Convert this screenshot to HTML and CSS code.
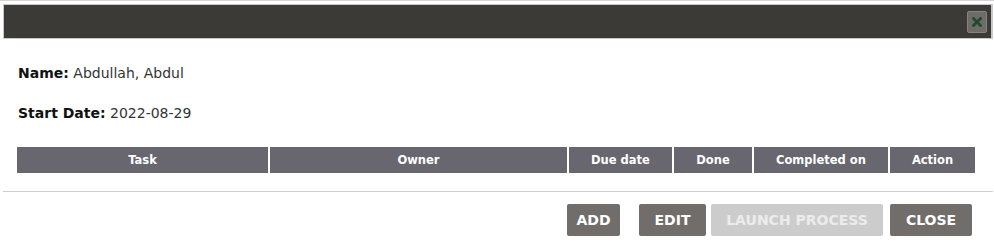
FILE: index.html
```html
<!DOCTYPE html>
<html>
<head>
<meta charset="utf-8">
<link rel="stylesheet" href="styles.css">
</head>
<body>
<div class="topline"></div>
<div class="dialog">
  <div class="titlebar">
    <button class="xbtn" aria-label="close">
      <svg width="10" height="10" viewBox="0 0 10 10"><path d="M1.5 1.5 L8.5 8.5 M8.5 1.5 L1.5 8.5" stroke="#1f4d2c" stroke-width="2.8" stroke-linecap="square"/></svg>
    </button>
  </div>
  <div class="content">
    <p class="field"><b>Name:</b> Abdullah, Abdul</p>
    <p class="field second"><b>Start Date:</b> 2022-08-29</p>
    <div class="thead">
      <div class="th c-task">Task</div>
      <div class="th c-owner">Owner</div>
      <div class="th c-due">Due date</div>
      <div class="th c-done">Done</div>
      <div class="th c-comp">Completed on</div>
      <div class="th c-act">Action</div>
    </div>
  </div>
  <div class="sep"></div>
  <div class="actions">
    <button class="btn add">ADD</button>
    <button class="btn edit">EDIT</button>
    <button class="btn launch" disabled>LAUNCH PROCESS</button>
    <button class="btn close">CLOSE</button>
  </div>
</div>
</body>
</html>
```
FILE: styles.css
```css
html, body { margin: 0; padding: 0; background: #fff; }
body { font-family: "DejaVu Sans", "Open Sans", sans-serif; color: #222; width: 994px; height: 250px; overflow: hidden; }
.topline { height: 1px; background: #d4d4d4; }
.dialog { margin: 3px 1px 0 3px; }
.titlebar {
  height: 35px; box-sizing: border-box; background: #3c3a37;
  border: 1px solid #c9c9c9; border-right-width: 2px;
  display: flex; justify-content: flex-end; align-items: center; padding-right: 4px;
}
.xbtn {
  width: 20px; height: 22px; padding: 0; margin: 0; border: 1px solid #858280; border-radius: 2px;
  background: #6e6b68; display: flex; align-items: center; justify-content: center;
}
.content { padding: 0 16px 0 15px; }
.field { margin: 0; font-size: 14px; line-height: 17px; color: #333; padding-top: 26px; }
.field.second { padding-top: 23px; }
.field b { color: #111; font-weight: bold; }
.thead { display: flex; gap: 2px; margin-top: 25px; height: 26px; margin-left: -1px; }
.th {
  background: #68666e; color: #fff; font-weight: bold; font-size: 11.5px;
  display: flex; align-items: center; justify-content: center;
}
.c-task { width: 251px; }
.c-owner { width: 297px; }
.c-due { width: 103px; }
.c-done { width: 78px; }
.c-comp { width: 134px; }
.c-act { width: 85px; }
.sep { height: 1px; background: #cfcfcf; margin-top: 18px; }
.actions { display: flex; justify-content: flex-end; padding-right: 21px; margin-top: 12px; }
.btn {
  height: 32px; border: none; border-radius: 2px; background: #716d6a; color: #fff;
  font-family: inherit; font-weight: bold; font-size: 14px; padding: 0; margin: 0;
}
.add { width: 53px; }
.edit { width: 67px; margin-left: 19px; }
.launch { width: 172px; margin-left: 5px; background: #cdcccc; color: #ececec; }
.close { width: 82px; margin-left: 7px; }
```
